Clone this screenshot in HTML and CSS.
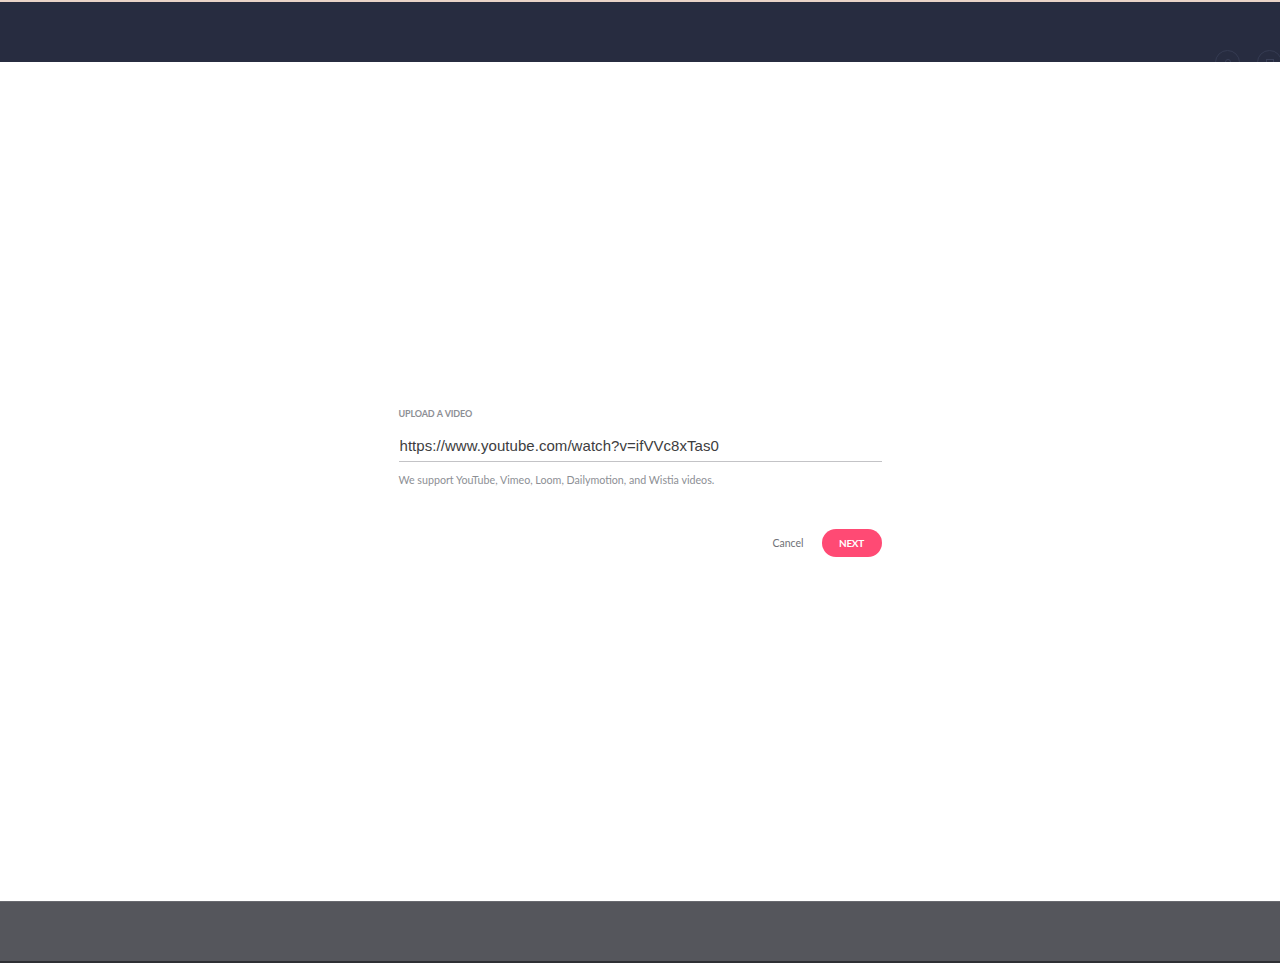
FILE: index.html
```html
<!DOCTYPE html>
<html lang="en">
<head>
<meta charset="utf-8">
<title>Upload a video</title>
<link rel="stylesheet" href="styles.css">
</head>
<body>
<div class="page">
  <header class="topbar">
    <div class="ghost-icons">
      <span class="ghost-circle">
        <svg width="10" height="8" viewBox="0 0 10 8"><circle cx="5" cy="4" r="2.5" fill="none" stroke="#3a4058" stroke-width="1"/></svg>
      </span>
      <span class="ghost-circle">
        <svg width="10" height="8" viewBox="0 0 10 8"><rect x="1.5" y="1.5" width="7" height="7" fill="none" stroke="#3a4058" stroke-width="1"/></svg>
      </span>
    </div>
  </header>
  <main class="main">
    <form class="upload" onsubmit="return false">
      <label class="upload-label" for="url">UPLOAD A VIDEO</label>
      <input class="upload-input" id="url" type="text" value="https://www.youtube.com/watch?v=ifVVc8xTas0">
      <p class="upload-help">We support YouTube, Vimeo, Loom, Dailymotion, and Wistia videos.</p>
      <div class="upload-actions">
        <button type="button" class="btn-cancel">Cancel</button>
        <button type="submit" class="btn-next">NEXT</button>
      </div>
    </form>
  </main>
  <footer class="bottombar"></footer>
</div>
</body>
</html>
```

FILE: styles.css
```css
html, body {
  margin: 0;
  padding: 0;
  height: 100%;
}
body {
  font-family: Lato, "Open Sans", "Liberation Sans", sans-serif;
  background: #ffffff;
}
.page {
  display: flex;
  flex-direction: column;
  height: 963px;
}
.topbar {
  height: 60px;
  flex: 0 0 auto;
  background: #272c40;
  border-top: 2px solid #e9d3c8;
  overflow: hidden;
  display: flex;
  justify-content: flex-end;
}
.ghost-icons {
  display: flex;
  gap: 17px;
  padding-top: 48px;
  margin-right: -2px;
}
.ghost-circle {
  width: 25px;
  height: 25px;
  border-radius: 50%;
  border: 1px solid #353b52;
  box-sizing: border-box;
  display: flex;
  justify-content: center;
  padding-top: 7px;
}
.main {
  flex: 1 1 auto;
  display: flex;
  align-items: center;
  justify-content: center;
  background: #ffffff;
}
.upload {
  width: 483px;
  display: flex;
  flex-direction: column;
  margin-top: 1px;
}
.upload-label {
  font-size: 9px;
  font-weight: 700;
  color: #8d8f95;
  line-height: 14px;
  word-spacing: 0.5px;
  letter-spacing: -0.15px;
}
.upload-input {
  box-sizing: border-box;
  margin-top: 15px;
  border: none;
  border-bottom: 1px solid #c3c3c6;
  padding: 0 0 7px 1px;
  font-family: "Liberation Sans", Arial, sans-serif;
  font-size: 15px;
  letter-spacing: 0.05px;
  line-height: 18px;
  height: 26px;
  color: #3d3d40;
  outline: none;
  background: transparent;
}
.upload-help {
  margin: 11px 0 0 0;
  font-size: 10.7px;
  line-height: 13px;
  color: #8d8f95;
}
.upload-actions {
  margin-top: 43px;
  display: flex;
  justify-content: flex-end;
  align-items: center;
  gap: 18px;
}
.btn-cancel {
  border: none;
  background: none;
  padding: 0;
  font-family: inherit;
  font-size: 10.5px;
  color: #6f7177;
  cursor: pointer;
}
.btn-next {
  width: 60px;
  height: 28px;
  border: none;
  border-radius: 14px;
  background: #ff4a74;
  color: #ffffff;
  font-family: inherit;
  font-weight: 700;
  font-size: 10px;
  letter-spacing: -0.3px;
  cursor: pointer;
}
.bottombar {
  height: 59px;
  flex: 0 0 auto;
  background: #55565c;
  border-top: 1px solid #696a70;
  border-bottom: 2px solid #2e2f33;
}
```
